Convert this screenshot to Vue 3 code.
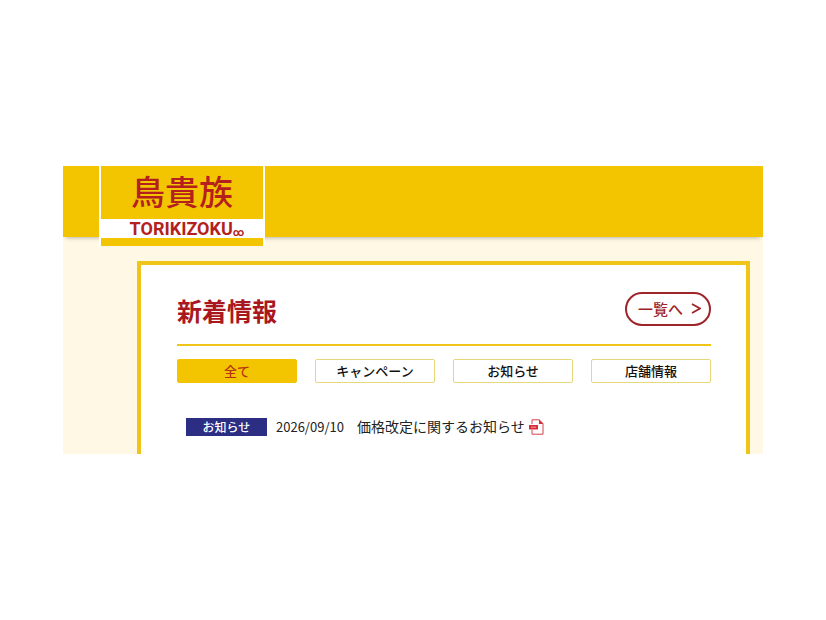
<template>
    <div class="page">
        <header class="header">
            <a class="logo" href="#" @click.prevent>
                <span class="logo-kanji">鳥貴族</span>
                <span class="logo-name">TORIKIZOKU<small>∞</small></span>
            </a>
        </header>
        <main class="main">
            <section class="news">
                <div class="news-head">
                    <h1>新着情報</h1>
                    <a class="more" href="#" @click.prevent>
                        一覧へ
                        <svg width="10" height="12" viewBox="0 0 10 12" aria-hidden="true">
                            <path d="M1 2 9 6.5 1 11" fill="none" stroke="currentColor" stroke-width="1.8" />
                        </svg>
                    </a>
                </div>
                <div class="tabs">
                    <button
                        v-for="tab in tabs"
                        :key="tab"
                        type="button"
                        :class="{ active: tab === current }"
                        @click="current = tab"
                    >{{ tab }}</button>
                </div>
                <ul class="list">
                    <li v-for="item in filtered" :key="item.title">
                        <span class="badge">{{ item.category }}</span>
                        <time>{{ item.date }}</time>
                        <a href="#" @click.prevent>
                            {{ item.title }}
                            <svg width="15" height="16" viewBox="0 0 15 16" aria-hidden="true">
                                <path d="M3 5V.8h7.2L14 4.6v10.6H3V11" fill="#fff" stroke="#d5414a" stroke-width="1" />
                                <path d="M10 .5V5h4.5z" fill="#d5303a" />
                                <path d="M0 6h9v4.5H0z" fill="#d5303a" />
                                <path d="M2 8.2h5" stroke="#f0a0a4" stroke-width="1" />
                            </svg>
                        </a>
                    </li>
                </ul>
            </section>
        </main>
    </div>
</template>

<script setup>
import { ref, computed } from 'vue';

const tabs = ['全て', 'キャンペーン', 'お知らせ', '店舗情報'];
const current = ref('全て');

const items = ref([
    { category: 'お知らせ', date: '2026/09/10', title: '価格改定に関するお知らせ' }
]);

const filtered = computed(() =>
    current.value === '全て' ? items.value : items.value.filter((i) => i.category === current.value)
);
</script>

<style>
body {
    background: #fff;
}
</style>

<style scoped>
.page {
    margin: 166px 63px;
    background: #fef8e4;
    color: #222;
    font-family: "Noto Sans CJK JP", sans-serif;
}

a {
    color: inherit;
    text-decoration: none;
}

.header {
    position: relative;
    display: flex;
    height: 71px;
    padding-left: 36px;
    background: #f2c500;
    box-shadow: 0 4px 4px -3px #0004;
}

.logo {
    display: flex;
    flex-direction: column;
    box-sizing: border-box;
    width: 166px;
    height: 80px;
    border: solid #fff;
    border-width: 0 2px;
    background: #f2c500;
    color: #b51f1d;
    text-align: center;
}

.logo-kanji {
    height: 53px;
    font-size: 34px;
    font-weight: 500;
    line-height: 50px;
}

.logo-name {
    display: flex;
    justify-content: center;
    height: 19px;
    padding-left: 10px;
    background: #fff;
    font-family: Roboto, sans-serif;
    font-size: 18px;
    font-weight: 700;
    line-height: 20px;
}

.logo-name small {
    font-size: 11px;
    line-height: 28px;
}

.main {
    padding: 24px 13px 0 74px;
}

.news {
    padding: 27px 35px 18px 36px;
    border: 4px solid #efc51a;
    border-bottom: 0;
    background: #fff;
}

.news-head {
    display: flex;
    align-items: flex-end;
    justify-content: space-between;
    padding-bottom: 18px;
    border-bottom: 2px solid #efc51a;
}

h1 {
    margin: 0;
    color: #a9181f;
    font-size: 25px;
    font-weight: 700;
    line-height: 32px;
}

.more {
    display: flex;
    align-items: center;
    justify-content: space-between;
    box-sizing: border-box;
    width: 86px;
    height: 34px;
    padding: 0 8px 2px 11px;
    border: 2px solid #9d2529;
    border-radius: 17px;
    color: #9d2529;
    font-size: 15px;
    font-weight: 500;
}

.tabs {
    display: grid;
    grid-template-columns: repeat(4, 1fr);
    gap: 18px;
    margin-top: 13px;
}

.tabs button {
    height: 24px;
    padding: 0;
    border: 1px solid #e6d878;
    border-radius: 2px;
    background: #fff;
    color: #111;
    font: 500 13px/22px "Noto Sans CJK JP", sans-serif;
    cursor: pointer;
}

.tabs .active {
    border-color: #f2c500;
    background: #f2c500;
    color: #b8321a;
}

.list {
    margin: 35px 0 0;
    padding: 0 0 0 9px;
    list-style: none;
}

.list li {
    display: flex;
    align-items: center;
    height: 18px;
}

.badge {
    width: 81px;
    background: #2b2e83;
    color: #fff;
    font-size: 12px;
    font-weight: 500;
    line-height: 18px;
    text-align: center;
}

time {
    margin: 0 13px 0 9px;
    padding-bottom: 2px;
    font-size: 13px;
}

.list a {
    display: flex;
    align-items: center;
    gap: 4px;
    padding-bottom: 2px;
    font-size: 14px;
}

.list svg {
    margin-top: 2px;
}
</style>
